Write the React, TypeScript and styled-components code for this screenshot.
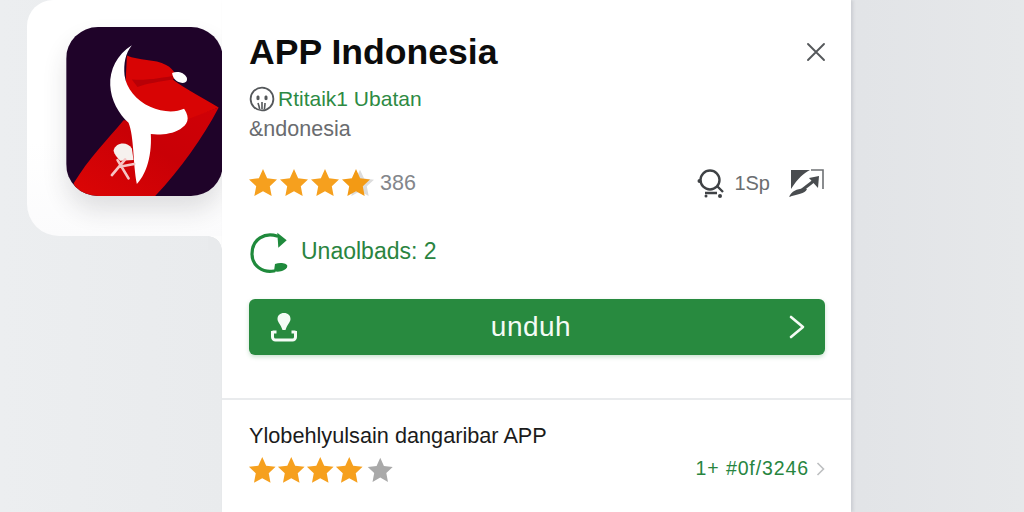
import React from "react";
import styled, { createGlobalStyle } from "styled-components";

const Global = createGlobalStyle`
  html, body { margin: 0; padding: 0; width: 1024px; height: 512px; overflow: hidden; }
  body { font-family: "Liberation Sans", Arial, sans-serif; }
`;

const Page = styled.div`
  width: 1024px;
  height: 512px;
  display: flex;
  align-items: flex-start;
  padding-left: 27px;
  box-sizing: border-box;
  overflow: hidden;
  background: linear-gradient(90deg, #eceef0 0%, #e9ebed 22%, #e2e4e7 84%, #e6e8ea 100%);
`;

const Wing = styled.div`
  position: relative;
  width: 195px;
  height: 236px;
  flex: none;
  box-sizing: border-box;
  padding: 27px 0 0 39px;
  background: linear-gradient(180deg, #ffffff 60%, #fbfbfc 100%);
  border-radius: 26px 0 0 32px;
  &::after {
    content: "";
    position: absolute;
    right: 0;
    top: 100%;
    width: 14px;
    height: 14px;
    background: radial-gradient(circle at 0 100%, #e8eaec 13.5px, #fdfdfd 14px);
  }
`;

const AppIcon = styled.svg`
  display: block;
  width: 157px;
  height: 169px;
  border-radius: 32px;
  box-shadow: 0 14px 24px rgba(40, 40, 50, 0.14);
`;

const Panel = styled.main`
  width: 629px;
  height: 512px;
  flex: none;
  box-sizing: border-box;
  padding: 0 26px 0 27px;
  background: #fff;
  box-shadow: 2px 0 3px rgba(120, 125, 135, 0.22);
  display: flex;
  flex-direction: column;
  position: relative;
`;

const TitleRow = styled.div`
  height: 40px;
  margin-top: 32px;
  display: flex;
  align-items: center;
  justify-content: space-between;
`;

const Title = styled.h1`
  margin: 0;
  font-size: 35.6px;
  line-height: 40px;
  font-weight: 700;
  color: #0c0c0c;
`;

const Close = styled.button`
  border: 0;
  background: none;
  padding: 0;
  width: 20px;
  height: 20px;
  margin-right: -1px;
  display: block;
  color: #55585b;
`;

const Seller = styled.div`
  margin-top: 14px;
  height: 26px;
  display: flex;
  align-items: center;
  gap: 3px;
  font-size: 21px;
  color: #2d8a43;
`;

const Region = styled.div`
  margin-top: 5px;
  font-size: 21.5px;
  line-height: 24px;
  color: #6a6c6f;
`;

const MetaRow = styled.div`
  margin-top: 26px;
  height: 32px;
  display: flex;
  align-items: center;
  justify-content: space-between;
`;

const Stars = styled.div<{ $overlap: number }>`
  display: flex;
  align-items: center;
  margin-left: -2px;
  & > svg:not(:first-child) {
    margin-left: ${(p) => -p.$overlap}px;
  }
`;

const StarGlyph = styled.svg<{ $after?: number }>`
  display: block;
  flex: none;
  overflow: visible;
  margin-right: ${(p) => p.$after ?? 0}px;
`;

const RatingGroup = styled.div`
  display: flex;
  align-items: center;
  gap: 8px;
`;

const Count = styled.span`
  font-size: 21.5px;
  color: #83868b;
`;

const StatGroup = styled.div`
  display: flex;
  align-items: center;
  color: #4e5154;
  font-size: 20px;
`;

const StatText = styled.span`
  margin: 0 19px 0 6px;
  color: #6b6e71;
`;

const Updates = styled.div`
  margin-top: 30px;
  height: 44px;
  display: flex;
  align-items: center;
  gap: 11px;
  font-size: 23px;
  color: #2a8440;
`;

const Download = styled.button`
  margin-top: 26px;
  height: 56px;
  width: 100%;
  border: 0;
  border-radius: 6px;
  padding: 0 19px 0 21px;
  flex: none;
  box-sizing: border-box;
  display: flex;
  align-items: center;
  justify-content: space-between;
  background: #288a3f;
  box-shadow: 0 2px 4px rgba(40, 138, 63, 0.25);
  color: #f4fbf5;
  font-family: inherit;
  font-size: 28px;
`;

const DownloadLabel = styled.span`
  letter-spacing: 0.5px;
  margin-right: 24px;
`;

const Divider = styled.hr`
  margin: 43px -26px 0 -27px;
  border: 0;
  height: 2px;
  flex: none;
  background: #e9ebed;
`;

const ListRow = styled.div`
  margin-top: 23px;
  display: flex;
  align-items: flex-end;
  justify-content: space-between;
`;

const ListText = styled.div`
  display: flex;
  flex-direction: column;
  gap: 6px;
`;

const ListTitle = styled.div`
  font-size: 21.7px;
  line-height: 26px;
  color: #1b1b1b;
`;

const Code = styled.div`
  display: flex;
  align-items: center;
  gap: 7px;
  height: 26px;
  margin-bottom: 4px;
  font-size: 19.5px;
  letter-spacing: 0.9px;
  color: #27853f;
`;

const StarIcon = ({ fill, size, tail, after }: { fill: string; size: number; tail?: boolean; after?: number }) => (
  <StarGlyph $after={after} width={size} height={size} viewBox="0 0 24 24" aria-hidden="true">
    {tail && <path d="M12 2l3.100 6.600 7.400.9-5.400 5 1.400 7.200L12 18.200 5.500 21.700l1.400-7.200-5.400-5 7.400-.9z" fill="#dcdcdc" transform="translate(3 0)" />}
    <path d="M12 1.500l3.100 6.900 7.400.9-5.400 5.100 1.400 7.400L12 18.200l-6.500 3.600 1.400-7.400-5.400-5.100 7.400-.9z" fill={fill} />
  </StarGlyph>
);

export default function App() {
  return (
    <Page>
      <Global />
      <Wing>
        <AppIcon viewBox="18 20 470 508" aria-label="App icon">
          <defs>
            <linearGradient id="band" x1="0" y1="1" x2="1" y2="0">
              <stop offset="0" stopColor="#dc0505" />
              <stop offset="0.55" stopColor="#c90006" />
              <stop offset="1" stopColor="#d00006" />
            </linearGradient>
          </defs>
          <rect x="18" y="20" width="470" height="508" fill="#1f0329" />
          <path d="M40 490C85 415 140 360 190 300L360 300L476 262C430 350 360 450 285 528L70 528C55 520 45 505 40 490Z" fill="url(#band)" />
          <path d="M200 106C235 122 285 116 318 134C345 148 352 170 338 178C375 205 430 235 476 262L375 300L250 290L195 210Z" fill="#d80404" />
          <path d="M215 178C260 182 310 172 345 166L338 178C300 184 260 190 232 200Z" fill="#b80006" />
          <path d="M336 158C352 152 372 156 380 172C384 186 372 192 358 186C346 182 338 172 336 158Z" fill="#fff" />
          <path d="M215 75C170 102 148 150 150 195C152 240 175 280 205 308C222 350 218 430 230 492C252 470 276 420 272 342C300 345 335 342 360 327C382 314 392 295 372 266C345 278 305 276 270 260C228 240 198 205 193 165C190 130 195 100 215 75Z" fill="#fff" />
          <path d="M160 392C165 368 200 362 215 385L220 420L180 422C170 412 162 402 160 392Z" fill="#f6f1ee" />
          <path d="M155 465L195 418M172 420L205 475M178 440L222 432" stroke="#f6c4c4" strokeWidth="8" strokeLinecap="round" fill="none" />
        </AppIcon>
      </Wing>
      <Panel>
        <TitleRow>
          <Title>APP Indonesia</Title>
          <Close aria-label="Close">
            <svg width="20" height="20" viewBox="0 0 20 20" fill="none" stroke="currentColor" strokeWidth="1.900" strokeLinecap="round">
              <path d="M2 2l16 16M18 2L2 18" />
            </svg>
          </Close>
        </TitleRow>
        <Seller>
          <svg width="26" height="26" viewBox="0 0 26 26" fill="none" stroke="#55585b" strokeWidth="1.800">
            <circle cx="13" cy="13" r="11.400" />
            <path d="M7.500 11c0-2 3-2 3 0v2c0 1.500-3 1.500-3 0zM15.500 11c0-2 3-2 3 0v2c0 1.500-3 1.500-3 0z" fill="#55585b" stroke="none" />
            <path d="M9 17c1 3 1.500 5 1.500 6M13 16v7M16 17c0 3-.5 4-.5 6" strokeWidth="1.600" />
          </svg>
          <span>Rtitaik1 Ubatan</span>
        </Seller>
        <Region>&amp;ndonesia</Region>
        <MetaRow>
          <RatingGroup>
            <Stars $overlap={1}>
              <StarIcon fill="#f6a01e" size={32} />
              <StarIcon fill="#f6a01e" size={32} />
              <StarIcon fill="#f6a01e" size={32} />
              <StarIcon fill="#f39a14" size={32} tail />
            </Stars>
            <Count>386</Count>
          </RatingGroup>
          <StatGroup>
            <svg width="32" height="32" viewBox="0 0 32 32" fill="none" stroke="#3f4245" strokeWidth="2.400">
              <circle cx="14" cy="13" r="9.500" />
              <circle cx="3.500" cy="14" r="2" fill="#3f4245" stroke="none" />
              <path d="M21 19l6 6M9 26h12" />
              <circle cx="10" cy="29" r="1.500" fill="#3f4245" stroke="none" />
              <circle cx="24" cy="29" r="2" fill="#3f4245" stroke="none" />
            </svg>
            <StatText>1Sp</StatText>
            <svg width="36" height="30" viewBox="0 0 36 30" fill="none">
              <path d="M2 2H21C15 5 9 10 2 21Z" fill="#494c4f" />
              <path d="M22 2H34V21" stroke="#6d7073" strokeWidth="1.600" />
              <path d="M13 22L26 12" stroke="#494c4f" strokeWidth="3" />
              <path d="M20 10L30 8L29 20Z" fill="#494c4f" />
              <path d="M0 29C3 22 10 20 18 21C16 26 8 26 0 29Z" fill="#494c4f" />
            </svg>
          </StatGroup>
        </MetaRow>
        <Updates>
          <svg width="41" height="44" viewBox="0 0 41 44" fill="none" stroke="#1f8a3c" strokeWidth="3.200" strokeLinecap="round">
            <path d="M28 7C16 3 3 10 3 25C3 37 14 44 25 42" />
            <path d="M28.300 3.700L37.700 11.300L29.300 18.700Z" fill="#1f8a3c" stroke="none" />
            <path d="M26 35C31 33 38 34 38.300 37C38 41 30 44 25 42Z" fill="#1f8a3c" stroke="none" />
          </svg>
          <span>Unaolbads: 2</span>
        </Updates>
        <Download>
          <svg width="28" height="32" viewBox="0 0 28 32" fill="#f4fbf5">
            <path d="M14 2c4 0 6.500 2.500 6.500 6 0 3-3.500 6-5 11h-3c-1.500-5-5-8-5-11 0-3.500 2.500-6 6.500-6z" />
            <path d="M2.500 20v6a3 3 0 0 0 3 3h17a3 3 0 0 0 3-3v-6" fill="none" stroke="#f4fbf5" strokeWidth="3" />
            <path d="M2.500 21h4M21.500 21h4" stroke="#f4fbf5" strokeWidth="3" />
          </svg>
          <DownloadLabel>unduh</DownloadLabel>
          <svg width="18" height="26" viewBox="0 0 18 26" fill="none" stroke="#f4fbf5" strokeWidth="2.600" strokeLinecap="round" strokeLinejoin="round">
            <path d="M3 3l12 10L3 23" />
          </svg>
        </Download>
        <Divider />
        <ListRow>
          <ListText>
            <ListTitle>Ylobehlyulsain dangaribar APP</ListTitle>
            <Stars $overlap={1.5}>
              <StarIcon fill="#f6a01e" size={30.500} />
              <StarIcon fill="#f6a01e" size={30.500} />
              <StarIcon fill="#f6a01e" size={30.500} />
              <StarIcon fill="#f6a01e" size={30.500} after={3.200} />
              <StarIcon fill="#a9a9a9" size={28.500} />
            </Stars>
          </ListText>
          <Code>
            <span>1+ #0f/3246</span>
            <svg width="9" height="14" viewBox="0 0 9 14" fill="none" stroke="#bdbfc1" strokeWidth="1.600">
              <path d="M1.500 1l6 6-6 6" />
            </svg>
          </Code>
        </ListRow>
      </Panel>
    </Page>
  );
}
